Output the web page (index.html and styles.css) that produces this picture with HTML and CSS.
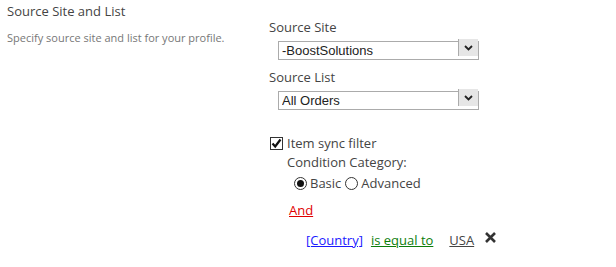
FILE: index.html
```html
<!DOCTYPE html>
<html lang="en">

<head>
    <meta charset="UTF-8">
    <title>Source Site and List</title>
    <link rel="stylesheet" href="styles.css">
</head>

<body>

    <div class="section">
        <div class="section-info">
            <h3 class="section-title">Source Site and List</h3>
            <p class="section-desc">Specify source site and list for your profile.</p>
        </div>

        <div class="section-body">
            <label class="field-label" for="source-site">Source Site</label>
            <div class="dropdown">
                <select id="source-site">
                    <option>-BoostSolutions</option>
                </select>
                <span class="dropdown-btn">
                    <svg width="9" height="6" viewBox="0 0 9 6"><path d="M1 1 L4.5 4.5 L8 1" fill="none" stroke="#222" stroke-width="1.8"/></svg>
                </span>
            </div>

            <label class="field-label" for="source-list">Source List</label>
            <div class="dropdown">
                <select id="source-list">
                    <option>All Orders</option>
                </select>
                <span class="dropdown-btn">
                    <svg width="9" height="6" viewBox="0 0 9 6"><path d="M1 1 L4.5 4.5 L8 1" fill="none" stroke="#222" stroke-width="1.8"/></svg>
                </span>
            </div>

            <div class="filter">
                <label class="check-row">
                    <span class="checkbox">
                        <svg width="11" height="11" viewBox="0 0 11 11"><path d="M1.5 5.5 L4.2 8.5 L9.5 1.5" fill="none" stroke="#111" stroke-width="2.2"/></svg>
                    </span>
                    Item sync filter
                </label>

                <div class="filter-body">
                    <div class="field-label">Condition Category:</div>
                    <div class="radio-row">
                        <label class="radio-item"><span class="radio checked"></span>Basic</label>
                        <label class="radio-item"><span class="radio"></span>Advanced</label>
                    </div>

                    <a class="link-and" href="#">And</a>

                    <div class="condition">
                        <a class="link-field" href="#">[Country]</a>
                        <a class="link-op" href="#">is equal to</a>
                        <a class="link-value" href="#">USA</a>
                        <svg class="remove" width="13" height="13" viewBox="0 0 13 13"><path d="M2 2 L11 11 M11 2 L2 11" stroke="#333" stroke-width="2.6"/></svg>
                    </div>
                </div>
            </div>
        </div>
    </div>

</body>

</html>
```

FILE: styles.css
```css
body {
    margin: 0;
    background: #fff;
    font-family: "Segoe UI", "Open Sans", sans-serif;
    color: #444;
}

.section {
    display: flex;
}

.section-info {
    width: 262px;
    padding-left: 7px;
}

.section-title {
    margin: 2px 0 0;
    font-size: 13px;
    font-weight: normal;
    line-height: 18px;
    color: #444;
}

.section-desc {
    margin: 10px 0 0;
    font-size: 11px;
    line-height: 16px;
    color: #777;
}

.section-body {
    padding-top: 18px;
}

.field-label {
    display: block;
    font-size: 13px;
    line-height: 18px;
    color: #444;
}

.dropdown {
    position: relative;
    width: 201px;
    height: 19px;
    margin: 2px 0 11px 9px;
}

.dropdown select {
    width: 100%;
    height: 100%;
    margin: 0;
    padding: 0 0 0 3px;
    border: 1px solid #ababab;
    border-radius: 0;
    background: #fff;
    font-family: "Liberation Sans", Arial, sans-serif;
    font-size: 13px;
    color: #222;
    appearance: none;
    -webkit-appearance: none;
}

.dropdown-btn {
    position: absolute;
    top: 1px;
    right: 1px;
    width: 19px;
    height: 17px;
    display: flex;
    align-items: center;
    justify-content: center;
    background: #e6e6e6;
    border-left: 1px solid #ababab;
    pointer-events: none;
}

.filter {
    margin-top: 27px;
}

.check-row {
    display: flex;
    align-items: center;
    gap: 4px;
    font-size: 13px;
    line-height: 18px;
    margin-left: 1px;
}

.checkbox {
    width: 11px;
    height: 11px;
    border: 1px solid #333;
    display: flex;
    align-items: center;
    justify-content: center;
}

.filter-body {
    padding-left: 18px;
    padding-top: 1px;
}

.radio-row {
    display: flex;
    gap: 4px;
    margin: 3px 0 0 7px;
    font-size: 13px;
    line-height: 18px;
}

.radio-item {
    display: flex;
    align-items: center;
    gap: 3px;
}

.radio {
    width: 11px;
    height: 11px;
    border: 1px solid #333;
    border-radius: 50%;
    position: relative;
}

.radio.checked::after {
    content: "";
    position: absolute;
    left: 2px;
    top: 2px;
    width: 7px;
    height: 7px;
    border-radius: 50%;
    background: #111;
}

.link-and {
    display: inline-block;
    margin: 9px 0 0 2px;
    font-size: 13px;
    line-height: 18px;
    color: #e00000;
}

.condition {
    display: flex;
    align-items: center;
    margin: 11px 0 0 19px;
    font-size: 13px;
    line-height: 18px;
}

.link-field {
    color: #1a1aff;
}

.link-op {
    margin-left: 8px;
    color: #0b7d0b;
}

.link-value {
    margin-left: 16px;
    color: #444;
}

.remove {
    margin: -6px 0 0 10px;
}
```
